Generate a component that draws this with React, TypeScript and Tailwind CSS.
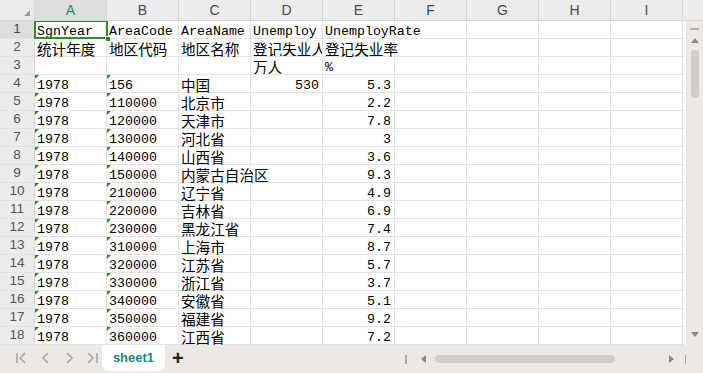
import React from "react";

type Row = { a: string; b: string; c: string; d?: string; e?: string; tri?: boolean };

const rows: Row[] = [
  { a: "SgnYear", b: "AreaCode", c: "AreaName", d: "Unemploy", e: "UnemployRate" },
  { a: "统计年度", b: "地区代码", c: "地区名称", d: "登记失业人数", e: "登记失业率" },
  { a: "", b: "", c: "", d: "万人", e: "%" },
  { a: "1978", b: "156", c: "中国", d: "530", e: "5.3", tri: true },
  { a: "1978", b: "110000", c: "北京市", e: "2.2", tri: true },
  { a: "1978", b: "120000", c: "天津市", e: "7.8", tri: true },
  { a: "1978", b: "130000", c: "河北省", e: "3", tri: true },
  { a: "1978", b: "140000", c: "山西省", e: "3.6", tri: true },
  { a: "1978", b: "150000", c: "内蒙古自治区", e: "9.3", tri: true },
  { a: "1978", b: "210000", c: "辽宁省", e: "4.9", tri: true },
  { a: "1978", b: "220000", c: "吉林省", e: "6.9", tri: true },
  { a: "1978", b: "230000", c: "黑龙江省", e: "7.4", tri: true },
  { a: "1978", b: "310000", c: "上海市", e: "8.7", tri: true },
  { a: "1978", b: "320000", c: "江苏省", e: "5.7", tri: true },
  { a: "1978", b: "330000", c: "浙江省", e: "3.7", tri: true },
  { a: "1978", b: "340000", c: "安徽省", e: "5.1", tri: true },
  { a: "1978", b: "350000", c: "福建省", e: "9.2", tri: true },
  { a: "1978", b: "360000", c: "江西省", e: "7.2", tri: true },
  { a: "1978", b: "360000", c: "", e: "", tri: true },
];

function Text({ s, right }: { s: string; right?: boolean }) {
  if (!s) return null;
  const cjk = /[\u4e00-\u9fff]/.test(s);
  return (
    <span
      className={
        (cjk
          ? "font-['Noto_Sans_CJK_SC',sans-serif] text-[14.6px] leading-[18px] relative top-[1px]"
          : "font-['Liberation_Mono',monospace] text-[13.3px] leading-[18px] relative top-[2px]") +
        " whitespace-nowrap text-black " +
        (right ? "pr-[3px]" : "pl-[2px]")
      }
    >
      {s}
    </span>
  );
}

function Tri() {
  return (
    <div className="absolute left-0 top-0 w-0 h-0 border-t-[4px] border-t-[#1e8a1e] border-r-[4px] border-r-transparent" />
  );
}

const cols = ["A", "B", "C", "D", "E", "F", "G", "H", "I"];

export default function App() {
  return (
    <div className="w-[703px] h-[373px] bg-white overflow-hidden flex flex-col font-['Liberation_Sans',sans-serif] select-none">
      {/* column header */}
      <div className="flex h-[21px] shrink-0 bg-[#ececec] border-b border-[#d6d6d6]">
        <div className="w-[35px] shrink-0 relative border-r border-[#d6d6d6]">
          <div className="absolute right-[4px] bottom-[4px] w-0 h-0 border-l-[6px] border-l-transparent border-b-[6px] border-b-[#9a9a9a]" />
        </div>
        {cols.map((c) => (
          <div
            key={c}
            className={
              "w-[72px] shrink-0 border-r border-[#d6d6d6] flex items-center justify-center text-[14px] " +
              (c === "A" ? "bg-[#dedede] text-[#1b8a7c]" : "text-[#4a4a4a]")
            }
          >
            {c}
          </div>
        ))}
        <div className="flex-1" />
      </div>

      <div className="flex flex-1 min-h-0">
        {/* grid */}
        <div className="flex flex-col overflow-hidden relative w-[684px]">
          {rows.map((r, i) => {
            const n = i + 1;
            const cells: { v: string; right?: boolean; clip?: boolean; noRight?: boolean }[] = [
              { v: r.a },
              { v: r.b },
              { v: r.c, noRight: n === 9 },
              { v: r.d ?? "", right: n === 4, clip: true },
              { v: r.e ?? "", right: n >= 4 },
              { v: "" },
              { v: "" },
              { v: "" },
              { v: "" },
            ];
            return (
              <div key={i} className="flex h-[18px] shrink-0 border-b border-[#e3e3e3]">
                <div
                  className={
                    "w-[35px] shrink-0 flex items-center justify-center text-[13.5px] border-r border-[#d6d6d6] " +
                    (n === 1 ? "bg-[#dedede] text-[#4a4a4a]" : "bg-[#ececec] text-[#555]")
                  }
                >
                  {n}
                </div>
                {cells.map((c, j) => (
                  <div
                    key={j}
                    className={
                      "w-[72px] shrink-0 relative flex items-center h-[17px] " +
                      (c.noRight ? "border-r border-transparent z-10 " : "border-r border-[#e3e3e3] ") +
                      (c.right ? "justify-end " : "") +
                      (c.clip ? "overflow-hidden " : "")
                    }
                  >
                    {r.tri && (j === 0 || j === 1) && <Tri />}
                    <Text s={c.v} right={c.right} />
                  </div>
                ))}
              </div>
            );
          })}
          {/* selection A1 */}
          <div className="absolute left-[34px] top-[-1px] w-[74px] h-[19px] border-2 border-[#2e8b2e] pointer-events-none z-20">
            <div className="absolute right-[-5px] bottom-[-5px] w-[6px] h-[6px] bg-[#2e8b2e] border border-white" />
          </div>
        </div>
        <div className="w-[2px] shrink-0 bg-white" />
        {/* vertical scrollbar */}
        <div className="w-[17px] shrink-0 bg-[#efe9e6] flex flex-col items-center relative">
          <div className="mt-[7px] w-[9px] h-[2px] bg-[#b5b1af]" />
          <div className="mt-[8px] w-0 h-0 border-l-[4px] border-l-transparent border-r-[4px] border-r-transparent border-b-[5px] border-b-[#8a8a8a]" />
          <div className="mt-[7px] w-[8px] h-[48px] rounded-full bg-[#d2cdcb]" />
          <div className="absolute bottom-[8px] w-0 h-0 border-l-[4px] border-l-transparent border-r-[4px] border-r-transparent border-t-[5px] border-t-[#8a8a8a]" />
        </div>
      </div>

      {/* tab bar */}
      <div className="h-[28px] shrink-0 bg-[#eee8e5] flex items-start relative">
        <div className="flex items-center h-[26px] pl-[14px] text-[#a9a9a9]">
          <svg width="22" height="14" viewBox="0 0 22 14">
            <path d="M3 2v10M11 2l-5 5 5 5" stroke="#a8a8a8" strokeWidth="1.6" fill="none" />
          </svg>
          <svg width="22" height="14" viewBox="0 0 22 14">
            <path d="M12 2l-5 5 5 5" stroke="#a8a8a8" strokeWidth="1.6" fill="none" />
          </svg>
          <svg width="22" height="14" viewBox="0 0 22 14">
            <path d="M9 2l5 5-5 5" stroke="#a8a8a8" strokeWidth="1.6" fill="none" />
          </svg>
          <svg width="22" height="14" viewBox="0 0 22 14">
            <path d="M8 2l5 5-5 5M17 2v10" stroke="#a8a8a8" strokeWidth="1.6" fill="none" />
          </svg>
        </div>
        <div className="w-[63px] h-[26px] bg-white rounded-b-[6px] flex items-center justify-center text-[13px] font-bold text-[#178a80]">
          sheet1
        </div>
        <div className="ml-[7px] h-[26px] flex items-center text-[20px] font-bold text-[#222] leading-none">+</div>

        {/* horizontal scrollbar */}
        <div className="absolute left-[405px] top-[9px] h-[10px] w-[285px] flex items-center">
          <div className="w-[1.5px] h-[9px] bg-[#aaa]" />
          <div className="ml-[14px] w-0 h-0 border-t-[4px] border-t-transparent border-b-[4px] border-b-transparent border-r-[5px] border-r-[#8a8a8a]" />
          <div className="ml-[9px] w-[180px] h-[8px] rounded-full bg-[#d2cdcb]" />
          <div className="ml-auto w-0 h-0 border-t-[4px] border-t-transparent border-b-[4px] border-b-transparent border-l-[5px] border-l-[#8a8a8a]" />
          <div className="ml-[11px] mr-[4px] w-[1.5px] h-[9px] bg-[#aaa]" />
        </div>
      </div>
    </div>
  );
}
